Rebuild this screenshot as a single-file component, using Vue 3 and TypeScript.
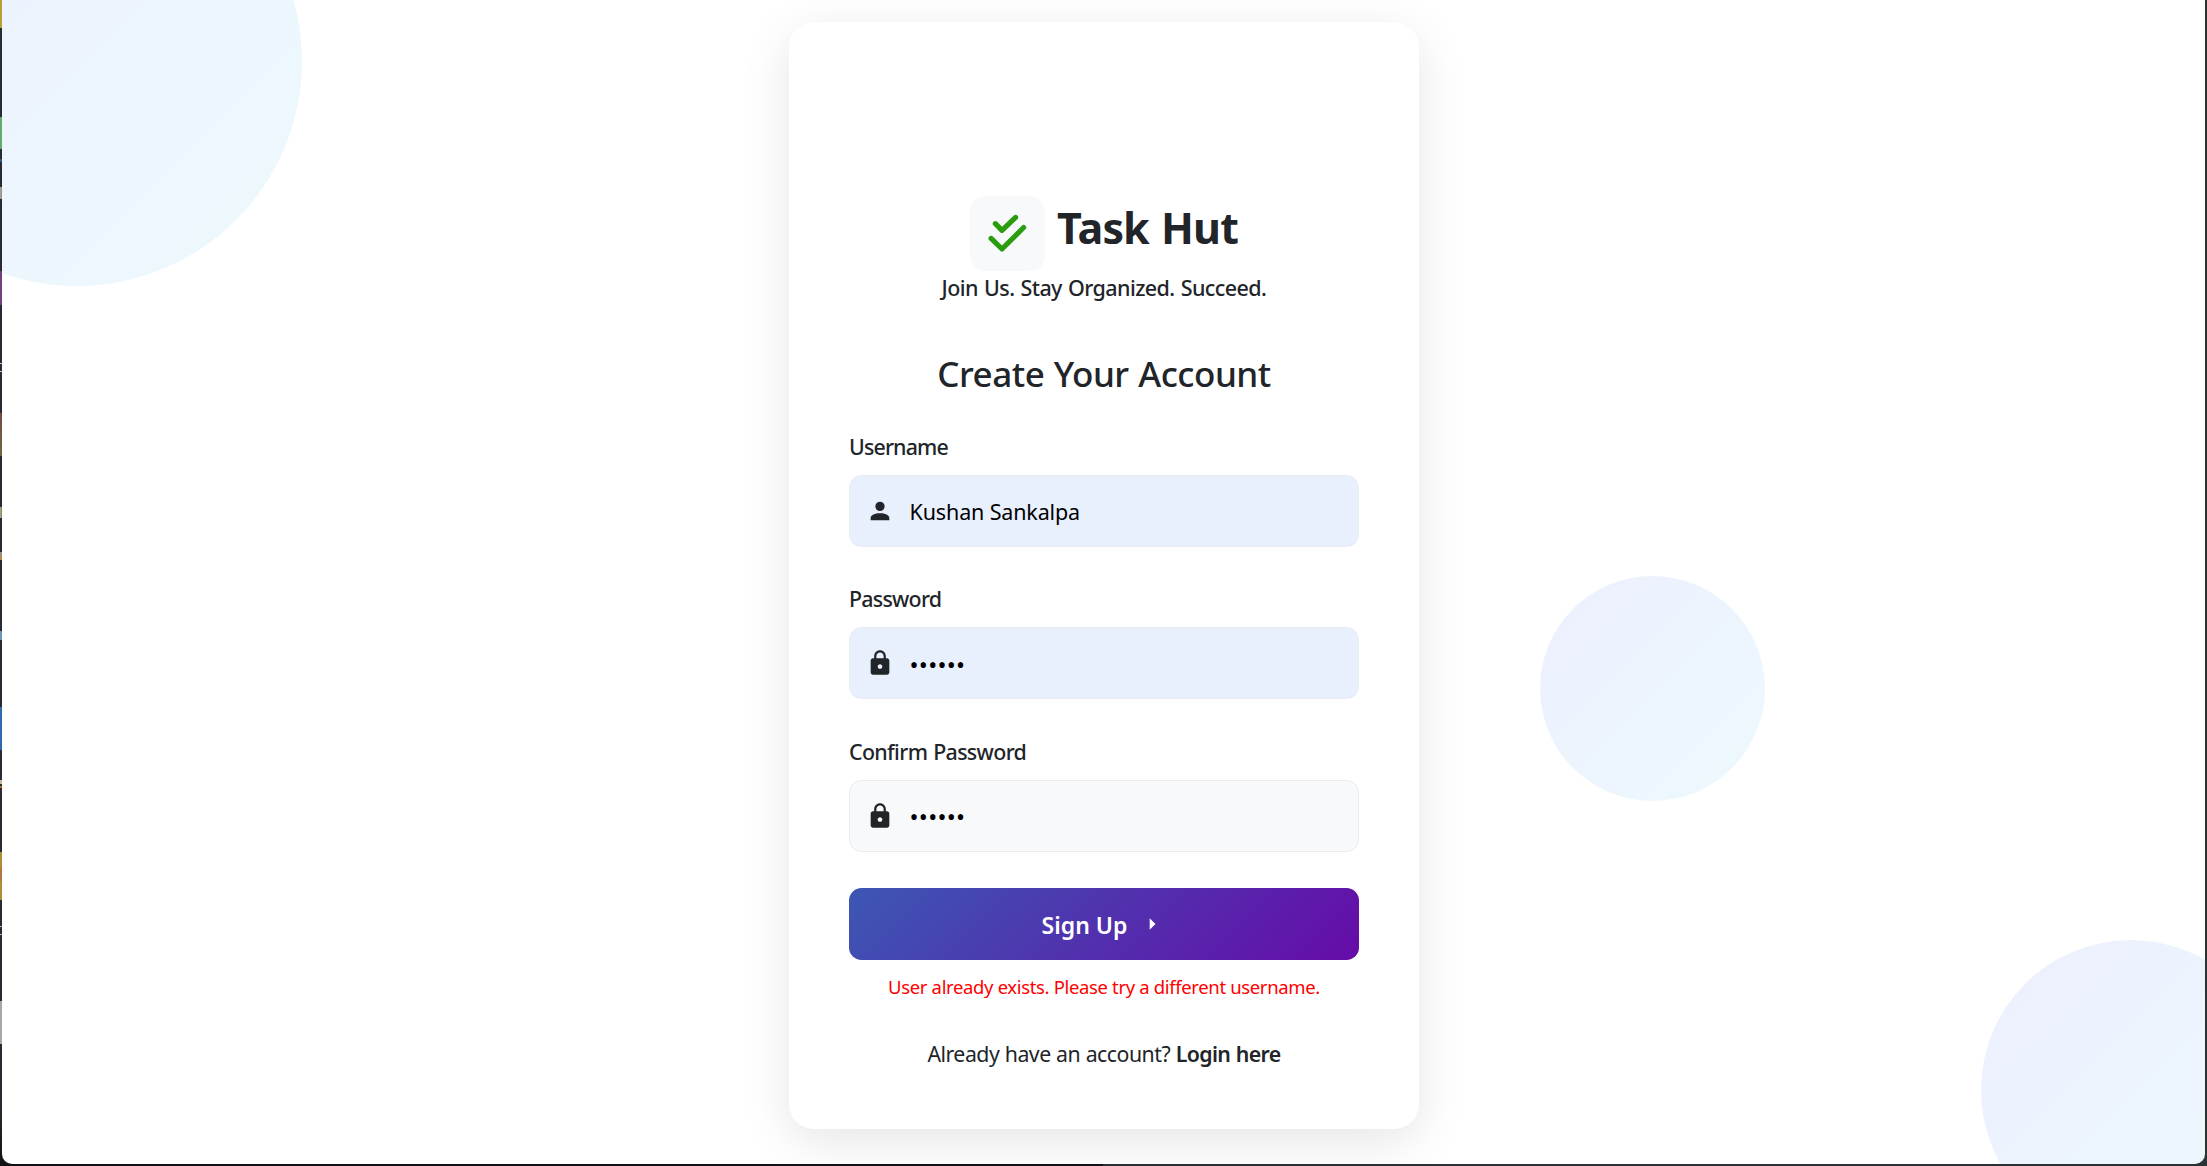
<script setup lang="ts">
import { reactive, ref } from 'vue'

interface Field {
  key: 'username' | 'password' | 'confirm'
  label: string
  type: string
  icon: string
  autofilled: boolean
}

interface Segment {
  top: number
  height: number
  fill: string
}

const icons = {
  person:
    'M12 4a4 4 0 0 1 4 4a4 4 0 0 1-4 4a4 4 0 0 1-4-4a4 4 0 0 1 4-4m0 10c4.42 0 8 1.79 8 4v2H4v-2c0-2.21 3.58-4 8-4z',
  lock:
    'M18 8h-1V6c0-2.76-2.24-5-5-5S7 3.24 7 6v2H6c-1.1 0-2 .9-2 2v10c0 1.1.9 2 2 2h12c1.1 0 2-.9 2-2V10c0-1.1-.9-2-2-2zm-6 9c-1.1 0-2-.9-2-2s.9-2 2-2 2 .9 2 2-.9 2-2 2zm3.1-9H8.9V6c0-1.71 1.39-3.1 3.1-3.1 1.71 0 3.1 1.39 3.1 3.1v2z',
}

const fields: Field[] = [
  { key: 'username', label: 'Username', type: 'text', icon: icons.person, autofilled: true },
  { key: 'password', label: 'Password', type: 'password', icon: icons.lock, autofilled: true },
  { key: 'confirm', label: 'Confirm Password', type: 'password', icon: icons.lock, autofilled: false },
]

const form = reactive({ username: 'Kushan Sankalpa', password: '••••••', confirm: '••••••' })
const error = ref('User already exists. Please try a different username.')

// Sliver of the desktop dock showing beside the window
const dock: Segment[] = [
  { top: 0, height: 28, fill: '#b5a034' },
  { top: 117, height: 32, fill: '#5fae6b' },
  { top: 159, height: 3, fill: '#2f5a85' },
  { top: 187, height: 12, fill: 'linear-gradient(90deg, #7da7c4 50%, #b98a55 50%)' },
  { top: 271, height: 34, fill: '#6f3f86' },
  { top: 363, height: 1, fill: '#c4c6c9' },
  { top: 371, height: 1, fill: '#c4c6c9' },
  { top: 413, height: 43, fill: 'linear-gradient(#764944, #6d6a40)' },
  { top: 507, height: 11, fill: 'linear-gradient(90deg, #7da7c4 50%, #b98230 50%)' },
  { top: 552, height: 8, fill: 'linear-gradient(#8b8f92, #c0872c)' },
  { top: 631, height: 9, fill: '#6d94bd' },
  { top: 707, height: 43, fill: '#2d6bb0' },
  { top: 780, height: 4, fill: '#c9b7a2' },
  { top: 786, height: 2, fill: '#a8742e' },
  { top: 852, height: 48, fill: 'linear-gradient(#b08c37 34%, #b5753f 34% 60%, #b08c37 60%)' },
  { top: 926, height: 1, fill: '#b4b6b9' },
  { top: 934, height: 1, fill: '#b4b6b9' },
  { top: 1001, height: 43, fill: '#a7a7a7' },
]
</script>

<template>
  <div class="desktop">
    <i
      v-for="seg in dock"
      :key="seg.top"
      class="dock-item"
      :style="{ top: seg.top + 'px', height: seg.height + 'px', background: seg.fill }"
    ></i>

    <main class="window">
      <i class="circle circle-a"></i>
      <i class="circle circle-b"></i>
      <i class="circle circle-c"></i>

      <form class="card" @submit.prevent>
        <div class="brand">
          <span class="logo">
            <svg viewBox="0 0 75 75" width="75" height="75">
              <path d="M25.4 27.7 32 34.3 45.6 21.4M21.1 42.4 32 53 53.6 31.5" />
            </svg>
          </span>
          <h1>Task Hut</h1>
        </div>
        <p class="tagline">Join Us. Stay Organized. Succeed.</p>
        <h2>Create Your Account</h2>

        <div v-for="f in fields" :key="f.key" class="field">
          <label :for="f.key" :class="f.key">{{ f.label }}</label>
          <div class="box" :class="{ autofilled: f.autofilled }">
            <svg viewBox="0 0 24 24" width="28" height="28"><path :d="f.icon" /></svg>
            <input :id="f.key" v-model="form[f.key]" type="text" :class="{ secret: f.type === 'password' }" />
          </div>
        </div>

        <button type="submit">
          <span>Sign Up</span>
          <svg viewBox="0 0 24 24" width="28" height="28"><path d="M10 17l5-5-5-5v10z" /></svg>
        </button>
        <p class="error">{{ error }}</p>
        <p class="switch">Already have an account? <a>Login here</a></p>
      </form>
    </main>
  </div>
</template>

<style>
body {
  margin: 0;
  background: #282c32;
}
</style>

<style scoped>
.desktop {
  position: relative;
  box-sizing: border-box;
  height: 1166px;
  padding: 0 2px 2px;
  overflow: hidden;
  background: linear-gradient(90deg, transparent 50%, #2c3134 50%), linear-gradient(#282b33 95%, #101114);
  font-family: 'Segoe UI', 'Noto Sans', 'Open Sans', sans-serif;
  color: #212529;
}

.dock-item {
  position: absolute;
  left: 0;
  width: 2px;
}

.window {
  position: relative;
  box-sizing: border-box;
  display: flex;
  justify-content: center;
  height: 1164px;
  padding: 22px 0 0 1px;
  overflow: hidden;
  border-radius: 0 0 10px 10px;
  background: #fff;
}

.circle {
  position: absolute;
  border-radius: 50%;
  background: linear-gradient(135deg, #4361ee, #4cc9f0);
  opacity: 0.1;
}

.circle-a {
  left: -150px;
  top: -164px;
  width: 450px;
  height: 450px;
}

.circle-b {
  left: 1538px;
  top: 576px;
  width: 225px;
  height: 225px;
}

.circle-c {
  left: 1979px;
  top: 940px;
  width: 300px;
  height: 300px;
}

.card {
  position: relative;
  box-sizing: border-box;
  display: flex;
  flex-direction: column;
  width: 630px;
  height: 1107px;
  padding: 174px 60px 0;
  border-radius: 25px;
  background: #fff;
  box-shadow: 0 12.5px 50px rgba(0, 0, 0, 0.1);
}

h1,
h2,
p {
  margin: 0;
  text-align: center;
  white-space: nowrap;
}

.brand {
  display: flex;
  justify-content: center;
  align-items: flex-start;
  gap: 12px;
}

.logo {
  display: block;
  width: 75px;
  height: 75px;
  border-radius: 15px;
  background: #f8f9fb;
}

.logo svg {
  display: block;
  fill: none;
  stroke: #2a9d0f;
  stroke-width: 5.2;
  stroke-linecap: round;
  stroke-linejoin: round;
}

h1 {
  font-size: 43px;
  font-weight: 700;
  line-height: 64px;
  letter-spacing: -0.9px;
  word-spacing: 2px;
}

.tagline {
  font-size: 21.5px;
  font-weight: 500;
  line-height: 33px;
  letter-spacing: -0.57px;
  word-spacing: 1px;
}

h2 {
  margin: 49px 0 36px;
  font-size: 35px;
  font-weight: 500;
  line-height: 42px;
  letter-spacing: -0.5px;
  word-spacing: 1px;
}

.field {
  display: flex;
  flex-direction: column;
  gap: 12px;
  margin-bottom: 36.3px;
}

label {
  font-size: 21.4px;
  font-weight: 500;
  line-height: 32px;
}

.username {
  letter-spacing: -0.85px;
}

.password {
  letter-spacing: -0.75px;
}

.confirm {
  letter-spacing: -0.65px;
  word-spacing: 1px;
}

.box {
  box-sizing: border-box;
  display: flex;
  align-items: center;
  gap: 15.2px;
  height: 72px;
  padding: 0 16.4px;
  border: 1px solid #e9ecef;
  border-radius: 12.5px;
  background: #f8f9fb;
}

.box.autofilled {
  background: #e8f0fe;
}

.box svg {
  flex: none;
  fill: #212529;
}

input {
  flex: 1;
  min-width: 0;
  height: 40px;
  padding: 0;
  border: 0;
  outline: 0;
  background: none;
  color: #000;
  font: 400 21.5px 'Segoe UI', 'Noto Sans', sans-serif;
  letter-spacing: -0.15px;
}

input.secret {
  padding-top: 2px;
  font-size: 24px;
  letter-spacing: 0.26px;
}

button {
  display: flex;
  align-items: center;
  justify-content: center;
  gap: 11px;
  height: 72px;
  margin-top: -0.4px;
  padding: 0;
  border: 0;
  border-radius: 12.5px;
  background: linear-gradient(135deg, #3c57b4, #660ba8);
  color: #fff;
  font: 600 23px 'Segoe UI', 'Noto Sans', sans-serif;
}

button span {
  padding-top: 2px;
}

button svg {
  fill: #fff;
}

.error {
  margin-top: 13px;
  color: #f00;
  font-size: 18.5px;
  line-height: 28px;
  letter-spacing: -0.35px;
}

.switch {
  margin-top: 37px;
  font-size: 21.3px;
  line-height: 32px;
  letter-spacing: -0.5px;
  word-spacing: 0.4px;
}

.switch a {
  font-weight: 600;
  letter-spacing: -0.6px;
}
</style>
